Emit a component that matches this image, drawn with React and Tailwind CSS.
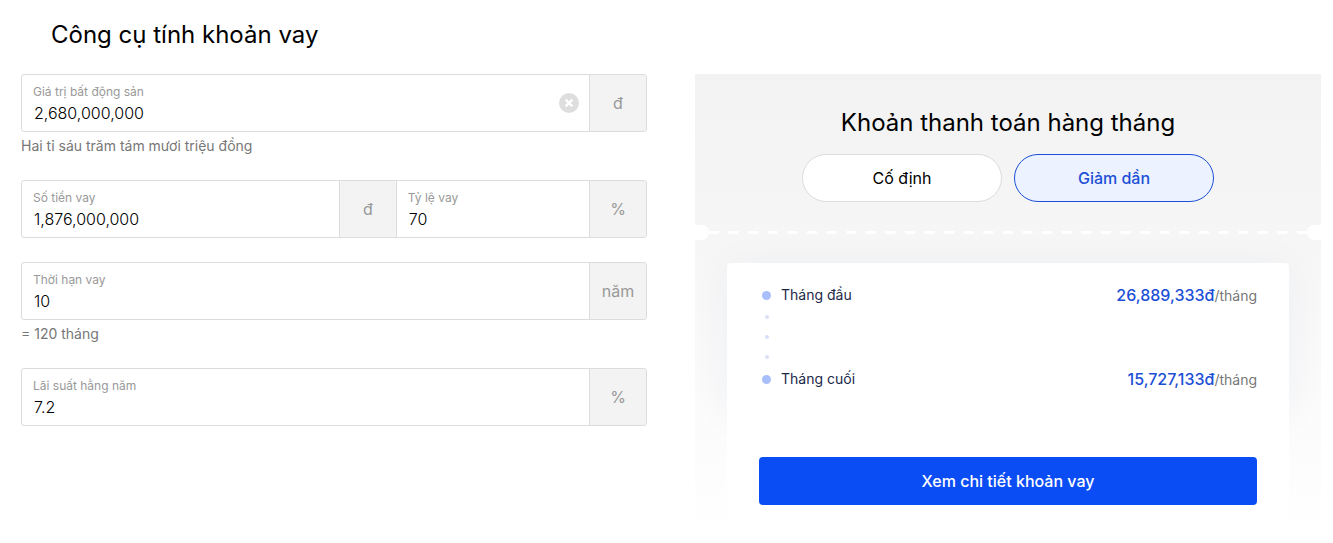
import { useState } from 'react';
import clsx from 'clsx';

const formatMoney = (value) => Math.floor(value).toLocaleString('en-US');
const parseNumber = (text) => Number(text.replace(/,/g, '')) || 0;

const getPayments = (loan, years, rate, mode) => {
  const months = years * 12;
  const monthlyRate = rate / 100 / 12;
  if (!months) return { first: 0, last: 0 };

  if (mode === 'fixed') {
    const payment = monthlyRate
      ? (loan * monthlyRate) / (1 - Math.pow(1 + monthlyRate, -months))
      : loan / months;
    return { first: payment, last: payment };
  }

  const principal = loan / months;
  return {
    first: principal + loan * monthlyRate,
    last: principal * (1 + monthlyRate)
  };
};

const FieldGroup = ({ children }) => (
  <div className="flex overflow-hidden rounded-[3px] border border-[#dcdcdc] bg-white">
    {children}
  </div>
);

const Field = ({ id, label, value, unit, onChange, onClear, className }) => (
  <div className={clsx('flex min-w-0', className)}>
    <div className="flex min-w-0 flex-1 items-center">
      <div className="min-w-0 flex-1 px-[11px] pt-[9px] pb-[6px]">
        <label htmlFor={id} className="block text-xs leading-4 text-[#999]">
          {label}
        </label>
        <input
          id={id}
          type="text"
          inputMode="decimal"
          value={value}
          onChange={(e) => onChange(e.target.value)}
          className="mt-px block h-6 w-full bg-transparent pl-px text-base font-light text-black outline-none"
        />
      </div>
      {onClear && (
        <button
          type="button"
          aria-label="Xóa"
          onClick={onClear}
          className="mr-2.5 shrink-0 cursor-pointer"
        >
          <svg width="20" height="20" viewBox="0 0 20 20" className="block">
            <circle cx="10" cy="10" r="10" fill="#dedede" />
            <path d="M6.6 6.6l6.8 6.8M13.4 6.6l-6.8 6.8" stroke="#fff" strokeWidth="2.2" />
          </svg>
        </button>
      )}
    </div>
    <span className="flex w-[57px] shrink-0 items-center justify-center border-l border-[#dcdcdc] bg-[#f3f3f3] text-base text-[#999]">
      {unit}
    </span>
  </div>
);

const Hint = ({ children }) => (
  <p className="mt-1 text-sm leading-5 text-[#777]">{children}</p>
);

const ModeButton = ({ active, onClick, children }) => (
  <button
    type="button"
    aria-pressed={active}
    onClick={onClick}
    className={clsx(
      'h-12 w-50 cursor-pointer rounded-full border text-base',
      active
        ? 'border-[#1c4fd6] bg-[#ecf2ff] font-medium text-[#1c4fd6]'
        : 'border-[#dcdcdc] bg-white text-black'
    )}
  >
    {children}
  </button>
);

const TicketDivider = () => (
  <div className="flex h-[15px] items-center">
    <span className="h-full w-3.5 rounded-r-full bg-white" />
    <svg height="3" className="min-w-0 flex-1">
      <line
        x1="0"
        y1="1.5"
        x2="100%"
        y2="1.5"
        stroke="#fff"
        strokeWidth="3"
        strokeDasharray="10 9.6"
      />
    </svg>
    <span className="h-full w-3.5 rounded-l-full bg-white" />
  </div>
);

const PaymentRow = ({ label, amount }) => (
  <div className="flex h-6 items-center justify-between">
    <div className="flex items-center">
      <span className="ml-[3px] size-[9px] rounded-full bg-[#a9bffb]" />
      <span className="ml-2.5 text-sm text-[#1c2849]">{label}</span>
    </div>
    <div className="text-sm text-[#777]">
      <span className="text-base font-medium text-[#1c4fd6]">{formatMoney(amount)}đ</span>
      /tháng
    </div>
  </div>
);

const App = () => {
  const [price, setPrice] = useState('2,680,000,000');
  const [ratio, setRatio] = useState('70');
  const [years, setYears] = useState('10');
  const [rate, setRate] = useState('7.2');
  const [mode, setMode] = useState('decreasing');

  const loan = (parseNumber(price) * parseNumber(ratio)) / 100;
  const payments = getPayments(loan, parseNumber(years), parseNumber(rate), mode);

  const handleLoanChange = (text) => {
    const total = parseNumber(price);
    if (total) setRatio(String((parseNumber(text) / total) * 100));
  };

  return (
    <main className="bg-white pt-[19px] pr-3 pl-[21px] font-['Inter','Noto_Sans',sans-serif]">
      <h1 className="pl-[30px] text-2xl leading-8 text-black">Công cụ tính khoản vay</h1>

      <div className="mt-[23px] grid grid-cols-2 gap-12">
        <form className="flex flex-col gap-6" onSubmit={(e) => e.preventDefault()}>
          <div>
            <FieldGroup>
              <Field
                id="price"
                label="Giá trị bất động sản"
                value={price}
                unit="đ"
                onChange={(text) => setPrice(formatMoney(parseNumber(text)))}
                onClear={() => setPrice('')}
                className="flex-1"
              />
            </FieldGroup>
            <Hint>Hai tỉ sáu trăm tám mươi triệu đồng</Hint>
          </div>

          <FieldGroup>
            <Field
              id="loan"
              label="Số tiền vay"
              value={formatMoney(loan)}
              unit="đ"
              onChange={handleLoanChange}
              className="flex-3"
            />
            <Field
              id="ratio"
              label="Tỷ lệ vay"
              value={ratio}
              unit="%"
              onChange={setRatio}
              className="flex-2 border-l border-[#dcdcdc]"
            />
          </FieldGroup>

          <div>
            <FieldGroup>
              <Field
                id="years"
                label="Thời hạn vay"
                value={years}
                unit="năm"
                onChange={setYears}
                className="flex-1"
              />
            </FieldGroup>
            <Hint>= {parseNumber(years) * 12} tháng</Hint>
          </div>

          <FieldGroup>
            <Field
              id="rate"
              label="Lãi suất hằng năm"
              value={rate}
              unit="%"
              onChange={setRate}
              className="flex-1"
            />
          </FieldGroup>
        </form>

        <section className="bg-linear-to-b from-[#f2f2f2] via-[#f6f6f6] via-35% to-white pt-[33px] pb-[18px]">
          <h2 className="text-center text-2xl leading-8 text-black">Khoản thanh toán hàng tháng</h2>
          <div className="mt-[15px] mb-[23px] flex justify-center gap-3">
            <ModeButton active={mode === 'fixed'} onClick={() => setMode('fixed')}>
              Cố định
            </ModeButton>
            <ModeButton active={mode === 'decreasing'} onClick={() => setMode('decreasing')}>
              Giảm dần
            </ModeButton>
          </div>

          <TicketDivider />

          {/* Payment summary */}
          <div className="mx-8 mt-[23px]">
            <div className="rounded-t bg-white px-8 py-5 shadow-[0_4px_40px_rgba(40,60,140,0.05)]">
              <PaymentRow label="Tháng đầu" amount={payments.first} />
              <div className="ml-1.5 flex h-15 flex-col justify-around">
                <span className="size-1 rounded-full bg-[#d8e0f4]" />
                <span className="size-1 rounded-full bg-[#d8e0f4]" />
                <span className="size-1 rounded-full bg-[#d8e0f4]" />
              </div>
              <PaymentRow label="Tháng cuối" amount={payments.last} />
            </div>
            <div className="relative rounded-b bg-white px-8 pt-[46px] pb-5">
              <button
                type="button"
                className="h-12 w-full cursor-pointer rounded bg-[#0a4df5] text-base font-medium text-white"
              >
                Xem chi tiết khoản vay
              </button>
            </div>
          </div>
        </section>
      </div>
    </main>
  );
};

export default App;
